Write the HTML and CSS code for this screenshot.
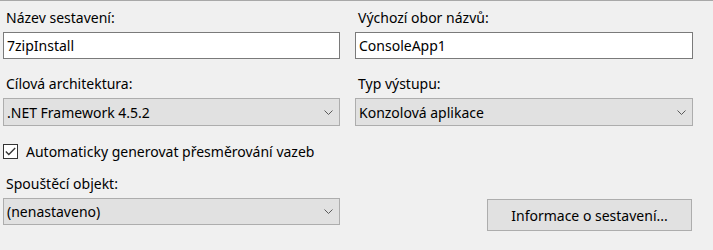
FILE: index.html
```html
<!DOCTYPE html>
<html lang="cs">
<head>
<meta charset="utf-8">
<title>Vlastnosti projektu</title>
<link rel="stylesheet" href="styles.css">
</head>
<body>
<div class="page">
  <div class="row row-first">
    <div class="field">
      <div class="label">Název sestavení:</div>
      <div class="textbox">7zipInstall</div>
    </div>
    <div class="field">
      <div class="label">Výchozí obor názvů:</div>
      <div class="textbox">ConsoleApp1</div>
    </div>
  </div>
  <div class="row row-second">
    <div class="field">
      <div class="label">Cílová architektura:</div>
      <div class="combo combo-tall"><span>.NET Framework 4.5.2</span><svg class="chev" width="9" height="5" viewBox="0 0 9 5"><polyline points="0.5,0.5 4.5,4.5 8.5,0.5" fill="none" stroke="#5a5a5a" stroke-width="1"/></svg></div>
    </div>
    <div class="field">
      <div class="label">Typ výstupu:</div>
      <div class="combo combo-tall"><span>Konzolová aplikace</span><svg class="chev" width="9" height="5" viewBox="0 0 9 5"><polyline points="0.5,0.5 4.5,4.5 8.5,0.5" fill="none" stroke="#5a5a5a" stroke-width="1"/></svg></div>
    </div>
  </div>
  <div class="check-row">
    <span class="checkbox"><svg width="11" height="9" viewBox="0 0 11 9"><polyline points="0.8,4.5 3.8,7.5 10.2,1" fill="none" stroke="#333" stroke-width="1.3"/></svg></span>
    <span class="check-label">Automaticky generovat přesměrování vazeb</span>
  </div>
  <div class="row row-third">
    <div class="field">
      <div class="label">Spouštěcí objekt:</div>
      <div class="combo"><span>(nenastaveno)</span><svg class="chev" width="9" height="5" viewBox="0 0 9 5"><polyline points="0.5,0.5 4.5,4.5 8.5,0.5" fill="none" stroke="#5a5a5a" stroke-width="1"/></svg></div>
    </div>
    <div class="field field-button">
      <div class="button">Informace o sestavení...</div>
    </div>
  </div>
</div>
</body>
</html>
```
FILE: styles.css
```css
html, body {
  margin: 0;
  padding: 0;
  background: #f0f0f0;
}
body {
  font-family: "Noto Sans", "Open Sans", sans-serif;
  font-size: 14px;
  color: #000;
  width: 713px;
  height: 250px;
  overflow: hidden;
}
.page {
  border-top: 1px solid #a8a8a8;
  padding: 0 0 0 3px;
}
.row {
  display: grid;
  grid-template-columns: 337px 338px;
  column-gap: 15px;
}
.row-first { margin-top: 7px; }
.row-second { margin-top: 15px; }
.row-third { margin-top: 13px; }
.field {
  display: flex;
  flex-direction: column;
}
.label {
  height: 20px;
  line-height: 20px;
  padding-left: 3px;
  margin-bottom: 4px;
  white-space: nowrap;
}
.textbox {
  box-sizing: border-box;
  height: 27px;
  line-height: 25px;
  background: #fff;
  border: 1px solid #7a7a7a;
  padding-left: 3px;
  white-space: nowrap;
}
.combo {
  box-sizing: border-box;
  height: 27px;
  background: #e1e1e1;
  border: 1px solid #adadad;
  padding: 0 5px 0 3px;
  display: flex;
  align-items: center;
  justify-content: space-between;
  white-space: nowrap;
}
.combo-tall { height: 28px; }
.chev { flex: none; margin-right: 1px; }
.check-row {
  display: flex;
  align-items: center;
  height: 20px;
  margin-top: 15px;
}
.checkbox {
  box-sizing: border-box;
  width: 15px;
  height: 15px;
  border: 1px solid #333;
  background: #fff;
  display: flex;
  align-items: center;
  justify-content: center;
  margin-right: 8px;
}
.check-label { white-space: nowrap; }
.field-button {
  justify-content: flex-end;
  align-items: flex-end;
  padding-right: 1px;
}
.button {
  box-sizing: border-box;
  width: 205px;
  height: 32px;
  margin-bottom: -6px;
  background: #e1e1e1;
  border: 1px solid #adadad;
  display: flex;
  align-items: center;
  justify-content: center;
  white-space: nowrap;
}
```
